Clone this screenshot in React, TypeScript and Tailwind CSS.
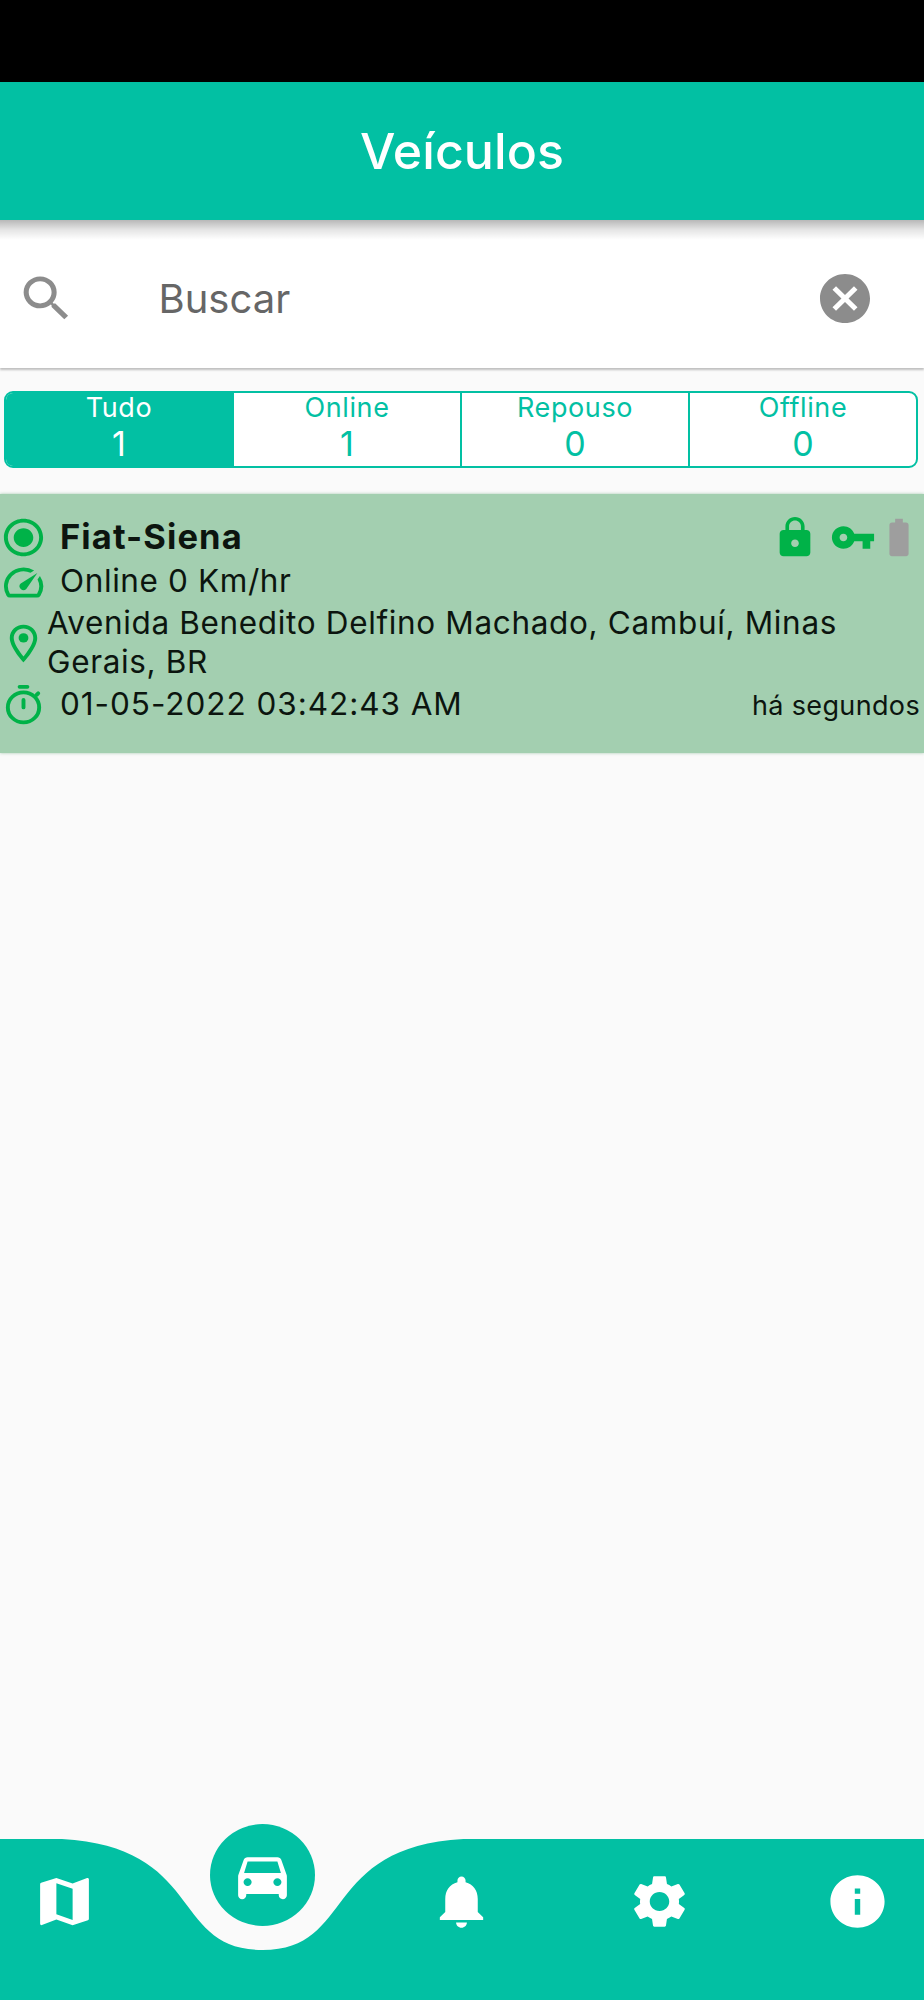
import React from "react";

type IconProps = { className?: string; children: React.ReactNode };

function Icon({ className = "", children }: IconProps) {
  return (
    <svg viewBox="0 0 24 24" preserveAspectRatio="none" fill="currentColor" className={`block shrink-0 ${className}`}>
      {children}
    </svg>
  );
}

const filters = [
  { label: "Tudo", count: 1, active: true },
  { label: "Online", count: 1, active: false },
  { label: "Repouso", count: 0, active: false },
  { label: "Offline", count: 0, active: false },
];

function Header() {
  return (
    <header className="relative z-10 flex h-[138px] items-center justify-center bg-[#02c0a3]">
      <h1 className="text-[50px] font-[550] leading-none tracking-[0.1px] text-white">Veículos</h1>
      <div className="absolute inset-x-0 top-full h-[20px] bg-linear-to-b from-black/28 via-black/10 to-transparent" />
    </header>
  );
}

function SearchBar() {
  return (
    <div className="flex h-[148px] items-center bg-white pl-4 pr-[49px] pt-[9px] shadow-[0_2px_2px_rgba(0,0,0,0.24)]">
      <Icon className="h-[59px] w-[61px] text-[#8c8c8c]">
        <path d="M15.5 14h-.79l-.28-.27A6.471 6.471 0 0 0 16 9.5 6.5 6.5 0 1 0 9.5 16c1.61 0 3.09-.59 4.23-1.57l.27.28v.79l5 4.99L20.49 19l-4.99-5zm-6 0C7.01 14 5 11.99 5 9.5S7.01 5 9.5 5 14 7.01 14 9.5 11.99 14 9.5 14z" />
      </Icon>
      <span className="ml-[81.5px] flex-1 text-[40px] leading-none text-[#666]">Buscar</span>
      <Icon className="h-[59px] w-[60px] text-[#8c8c8c]">
        <path d="M12 2C6.47 2 2 6.47 2 12s4.47 10 10 10 10-4.47 10-10S17.53 2 12 2zm5 13.59L15.59 17 12 13.41 8.41 17 7 15.59 10.59 12 7 8.41 8.41 7 12 10.59 15.59 7 17 8.41 13.41 12 17 15.59z" />
      </Icon>
    </div>
  );
}

function Filters() {
  return (
    <div className="ml-[4px] mr-[6px] mt-[23px] flex h-[77px] overflow-hidden rounded-[9px] border-2 border-[#02c0a3] bg-white">
      {filters.map((f, i) => (
        <button
          key={f.label}
          className={`flex flex-1 flex-col items-center ${i > 0 ? "border-l-2 border-[#02c0a3]" : ""} ${
            f.active ? "bg-[#02c0a3] text-white" : "text-[#02c0a3]"
          }`}
        >
          <span className="text-[27px] leading-[29px] tracking-[0.6px]">{f.label}</span>
          <span className="text-[34px] leading-[44px]">{f.count}</span>
        </button>
      ))}
    </div>
  );
}

function VehicleCard() {
  return (
    <section className="mt-[26px] h-[259px] bg-[#a3cfb0] pt-[21px] text-[31.5px] text-[#0c150f] shadow-[0_0_3px_rgba(60,140,85,0.45)]">
      <div className="flex h-[45px] items-center pr-[2px]">
        <Icon className="h-[45px] w-[47px] text-[#00b248]">
          <path d="M12 7c-2.76 0-5 2.24-5 5s2.24 5 5 5 5-2.24 5-5-2.24-5-5-5zm0-5C6.48 2 2 6.48 2 12s4.48 10 10 10 10-4.48 10-10S17.52 2 12 2zm0 18c-4.42 0-8-3.58-8-8s3.58-8 8-8 8 3.58 8 8-3.58 8-8 8z" />
        </Icon>
        <span className="ml-[13px] flex-1 text-[34.5px] font-bold leading-none tracking-[1.1px]">Fiat-Siena</span>
        <Icon className="mr-[12.5px] h-[45px] w-[46px] text-[#00b248]">
          <path d="M18 8h-1V6c0-2.76-2.24-5-5-5S7 3.24 7 6v2H6c-1.1 0-2 .9-2 2v10c0 1.1.9 2 2 2h12c1.1 0 2-.9 2-2V10c0-1.1-.9-2-2-2zm-6 9c-1.1 0-2-.9-2-2s.9-2 2-2 2 .9 2 2-.9 2-2 2zm3.1-9H8.9V6c0-1.71 1.39-3.1 3.1-3.1 1.71 0 3.1 1.39 3.1 3.1v2z" />
        </Icon>
        <Icon className="h-[45px] w-[46px] text-[#00b248]">
          <path d="M12.65 10C11.83 7.67 9.61 6 7 6c-3.31 0-6 2.69-6 6s2.69 6 6 6c2.61 0 4.83-1.67 5.65-4H17v4h4v-4h2v-4H12.65zM7 14c-1.1 0-2-.9-2-2s.9-2 2-2 2 .9 2 2-.9 2-2 2z" />
        </Icon>
        <Icon className="h-[45px] w-[46px] text-[#9e9e9e]">
          <path d="M15.67 4H14V2h-4v2H8.33C7.6 4 7 4.6 7 5.33v15.33C7 21.4 7.6 22 8.33 22h7.33c.74 0 1.34-.6 1.34-1.33V5.33C17 4.6 16.4 4 15.67 4z" />
        </Icon>
      </div>
      <div className="flex h-[44px] items-center">
        <Icon className="h-[45px] w-[47px] text-[#00b248]">
          <path d="m20.38 8.57-1.23 1.85a8 8 0 0 1-.22 7.58H5.07A8 8 0 0 1 15.58 6.85l1.85-1.23A10 10 0 0 0 3.35 19a2 2 0 0 0 1.72 1h13.85a2 2 0 0 0 1.74-1 10 10 0 0 0-.27-10.44zm-9.79 6.84a2 2 0 0 0 2.83 0l5.66-8.49-8.49 5.66a2 2 0 0 0 0 2.83z" />
        </Icon>
        <span className="ml-[13px] pb-[3px] leading-none tracking-[0.6px]">Online 0 Km/hr</span>
      </div>
      <div className="flex h-[79px] items-center">
        <Icon className="h-[45px] w-[47px] text-[#00b248]">
          <path d="M12 2C8.13 2 5 5.13 5 9c0 5.25 7 13 7 13s7-7.75 7-13c0-3.87-3.13-7-7-7zM7 9c0-2.76 2.24-5 5-5s5 2.24 5 5c0 2.88-2.88 7.19-5 9.88C9.92 16.21 7 11.85 7 9z" />
          <circle cx="12" cy="9" r="2.5" />
        </Icon>
        <p className="flex-1 pb-[3px] pr-[60px] leading-[39.5px] tracking-[0.65px]">
          Avenida Benedito Delfino Machado, Cambuí, Minas Gerais, BR
        </p>
      </div>
      <div className="flex h-[45px] items-center pr-[4px]">
        <Icon className="h-[45px] w-[47px] text-[#00b248]">
          <g fill="none" stroke="currentColor" strokeWidth="2" strokeLinecap="round">
            <circle cx="12" cy="13" r="8" />
            <path d="M10 2h4M12 9v4M18.7 6.3l.8-.8" />
          </g>
        </Icon>
        <span className="ml-[13px] flex-1 pb-[3px] leading-none tracking-[0.95px]">01-05-2022 03:42:43 AM</span>
        <span className="pb-[1px] text-[27px] leading-none tracking-[0.35px]">há segundos</span>
      </div>
    </section>
  );
}

function BottomNav() {
  return (
    <nav className="relative flex h-[161px] items-start justify-between pl-[32px] pr-[34px] pt-[31px] text-white">
      <svg viewBox="0 0 924 161" className="absolute inset-0 h-full w-full">
        <path
          d="M0 0H62C205 8 170 111 262.7 111S320.4 8 463.4 0H924V161H0Z"
          fill="#02c0a3"
        />
      </svg>
      <Icon className="relative h-[63px] w-[65px]">
        <path d="m20.5 3-.16.03L15 5.1 9 3 3.36 4.9c-.21.07-.36.25-.36.48V20.5c0 .28.22.5.5.5l.16-.03L9 18.9l6 2.1 5.64-1.9c.21-.07.36-.25.36-.48V3.5c0-.28-.22-.5-.5-.5zM15 19l-6-2.11V5l6 2.11V19z" />
      </Icon>
      <div className="relative -mx-[20px] -mt-[46px] flex h-[102px] w-[105px] items-center justify-center rounded-[50%] bg-[#02c0a3]">
        <Icon className="h-[63px] w-[65px]">
          <path d="M18.92 6.01C18.72 5.42 18.16 5 17.5 5h-11c-.66 0-1.21.42-1.42 1.01l-1.97 5.67c-.07.21-.11.43-.11.66v7.16c0 .83.67 1.5 1.5 1.5S6 20.33 6 19.5V19h12v.5c0 .82.67 1.5 1.5 1.5.82 0 1.5-.67 1.5-1.5v-7.16c0-.22-.04-.45-.11-.66l-1.97-5.67zM6.5 6.7h11L18.8 11H5.2l1.3-4.3zM6.5 16c-.83 0-1.5-.67-1.5-1.5S5.67 13 6.5 13s1.5.67 1.5 1.5S7.33 16 6.5 16zm11 0c-.83 0-1.5-.67-1.5-1.5s.67-1.5 1.5-1.5 1.5.67 1.5 1.5-.67 1.5-1.5 1.5z" />
        </Icon>
      </div>
      <Icon className="relative h-[63px] w-[65px]">
        <path d="M12 22c1.1 0 2-.9 2-2h-4c0 1.1.89 2 2 2zm6-6v-5c0-3.07-1.64-5.64-4.5-6.32V4c0-.83-.67-1.5-1.5-1.5s-1.5.67-1.5 1.5v.68C7.63 5.36 6 7.92 6 11v5l-2 2v1h16v-1l-2-2z" />
      </Icon>
      <Icon className="relative h-[63px] w-[65px]">
        <path d="M19.14 12.94c.04-.3.06-.61.06-.94 0-.32-.02-.64-.07-.94l2.03-1.58c.18-.14.23-.41.12-.61l-1.92-3.32c-.12-.22-.37-.29-.59-.22l-2.39.96c-.5-.38-1.03-.7-1.62-.94l-.36-2.54c-.04-.24-.24-.41-.48-.41h-3.84c-.24 0-.43.17-.47.41l-.36 2.54c-.59.24-1.13.57-1.62.94l-2.39-.96c-.22-.08-.47 0-.59.22L2.74 8.87c-.12.21-.08.47.12.61l2.03 1.58c-.05.3-.09.63-.09.94s.02.64.07.94l-2.03 1.58c-.18.14-.23.41-.12.61l1.92 3.32c.12.22.37.29.59.22l2.39-.96c.5.38 1.03.7 1.62.94l.36 2.54c.05.24.24.41.48.41h3.84c.24 0 .44-.17.47-.41l.36-2.54c.59-.24 1.13-.56 1.62-.94l2.39.96c.22.08.47 0 .59-.22l1.92-3.32c.12-.22.07-.47-.12-.61l-2.01-1.58zM12 15.6c-1.98 0-3.6-1.62-3.6-3.6s1.62-3.6 3.6-3.6 3.6 1.62 3.6 3.6-1.62 3.6-3.6 3.6z" />
      </Icon>
      <Icon className="relative h-[63px] w-[65px]">
        <path d="M12 2C6.48 2 2 6.48 2 12s4.48 10 10 10 10-4.48 10-10S17.52 2 12 2zm1 15h-2v-6h2v6zm0-8h-2V7h2v2z" />
      </Icon>
    </nav>
  );
}

export default function App() {
  return (
    <div className="flex h-[2000px] w-[924px] flex-col overflow-hidden bg-[#fafafa] font-[Inter,'Liberation_Sans',sans-serif]">
      <div className="h-[82px] shrink-0 bg-black" />
      <Header />
      <SearchBar />
      <main className="flex-1">
        <Filters />
        <VehicleCard />
      </main>
      <BottomNav />
    </div>
  );
}
